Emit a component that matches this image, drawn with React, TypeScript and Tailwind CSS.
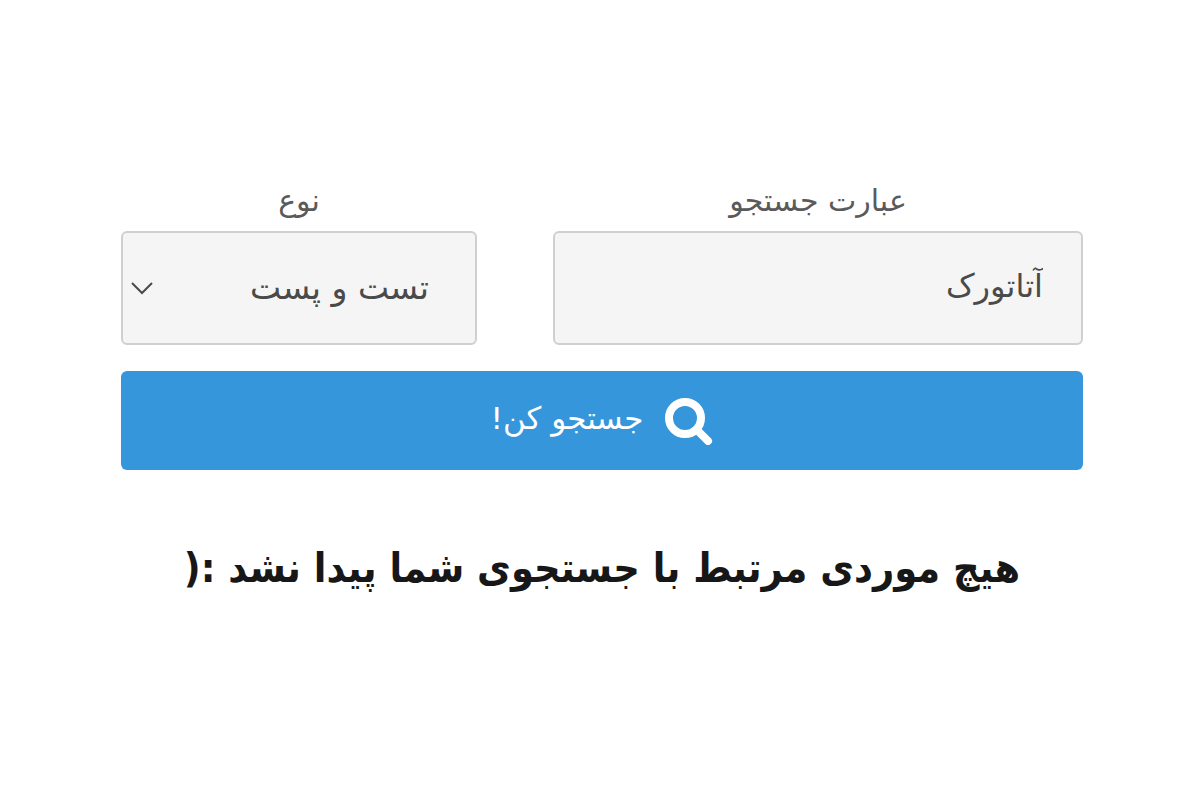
import React, { useState } from 'react';

const SearchIcon: React.FC = () => (
  <svg viewBox="0 0 48 48" className="h-12 w-12 shrink-0" fill="none" stroke="currentColor" aria-hidden="true">
    <circle cx="20" cy="21" r="16" strokeWidth="8" />
    <path d="M32 33L43 44" strokeWidth="8" strokeLinecap="round" />
  </svg>
);

export default function App() {
  const [query, setQuery] = useState('آتاتورک');

  return (
    <main
      dir="rtl"
      className="min-h-screen bg-white pl-[121px] pr-[117px] pt-[175px] font-['DejaVu_Sans',sans-serif] text-[#4a4a4a]"
    >
      <form onSubmit={(e) => e.preventDefault()}>
        <div className="flex gap-[76px]">
          <div className="flex min-w-0 flex-[530] flex-col">
            <label htmlFor="query" className="pb-1 text-center text-[30px] leading-[52px] text-[#5a5a5a]">
              عبارت جستجو
            </label>
            <input
              id="query"
              type="text"
              value={query}
              onChange={(e) => setQuery(e.target.value)}
              className="h-[114px] w-full rounded-md border-2 border-[#d0d0d0] bg-[#f5f5f5] px-[38px] pb-1 text-[32px] leading-[64px]"
            />
          </div>
          <div className="flex min-w-0 flex-[356] flex-col">
            <label htmlFor="kind" className="pb-1 text-center text-[30px] leading-[52px] text-[#5a5a5a]">
              نوع
            </label>
            <div className="relative">
              <select
                id="kind"
                className="h-[114px] w-full appearance-none rounded-md border-2 border-[#d0d0d0] bg-[#f5f5f5] px-[46px] text-[33px]"
              >
                <option>تست و پست</option>
              </select>
              <svg
                viewBox="0 0 24 14"
                className="pointer-events-none absolute left-2 top-1/2 h-[14px] w-6 -translate-y-1/2"
                fill="none"
                stroke="currentColor"
                strokeWidth="2"
                aria-hidden="true"
              >
                <path d="M3 2L13 12L23 2" />
              </svg>
            </div>
          </div>
        </div>
        <button
          type="submit"
          className="mt-[26px] flex h-[99px] w-full items-center justify-center gap-[22px] rounded-md bg-[#3696db] text-[31px] text-white"
        >
          <SearchIcon />
          <span className="pb-1">جستجو کن!</span>
        </button>
      </form>
      <h1 className="mt-[60px] text-center font-['DejaVu_Sans_Condensed','DejaVu_Sans',sans-serif] text-[41px] font-bold leading-[76px] text-[#171717]">
        هیچ موردی مرتبط با جستجوی شما پیدا نشد :(
      </h1>
    </main>
  );
}
